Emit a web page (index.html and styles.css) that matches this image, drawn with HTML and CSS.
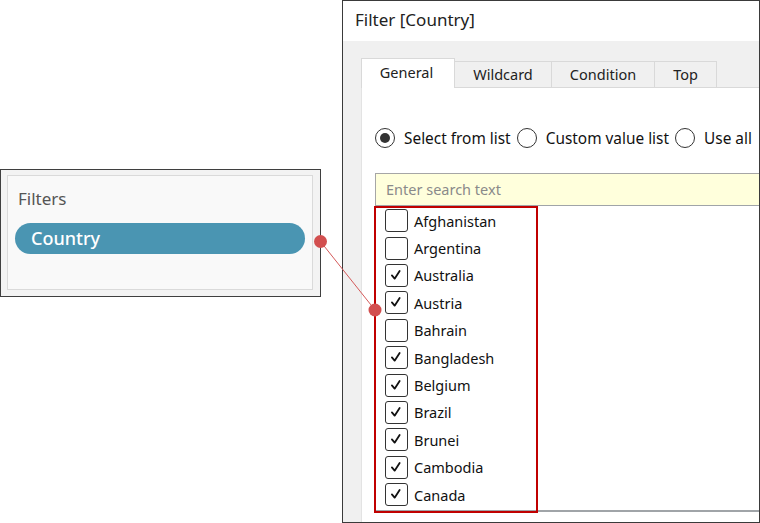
FILE: index.html
```html
<!DOCTYPE html>
<html>
<head>
<meta charset="utf-8">
<link rel="stylesheet" href="styles.css">
</head>
<body>
<div class="page">
  <div class="left">
    <div class="filters">
      <div class="filters-inner">
        <div class="filters-title">Filters</div>
        <div class="pill">Country</div>
      </div>
    </div>
  </div>
  <div class="dialog">
    <div class="titlebar">Filter [Country]</div>
    <div class="dialog-body">
      <div class="tabs">
        <div class="tab active">General</div>
        <div class="tab">Wildcard</div>
        <div class="tab">Condition</div>
        <div class="tab">Top</div>
      </div>
      <div class="panel">
        <div class="radios">
          <label class="radio"><span class="dot checked"></span>Select from list</label>
          <label class="radio"><span class="dot"></span>Custom value list</label>
          <label class="radio"><span class="dot"></span>Use all</label>
        </div>
        <div class="search">Enter search text</div>
        <div class="list">
          <div class="item"><span class="box"></span>Afghanistan</div>
          <div class="item"><span class="box"></span>Argentina</div>
          <div class="item"><span class="box"><svg viewBox="0 0 22 22"><path d="M6.5 11.5 L9.5 15 L15 6.5"/></svg></span>Australia</div>
          <div class="item"><span class="box"><svg viewBox="0 0 22 22"><path d="M6.5 11.5 L9.5 15 L15 6.5"/></svg></span>Austria</div>
          <div class="item"><span class="box"></span>Bahrain</div>
          <div class="item"><span class="box"><svg viewBox="0 0 22 22"><path d="M6.5 11.5 L9.5 15 L15 6.5"/></svg></span>Bangladesh</div>
          <div class="item"><span class="box"><svg viewBox="0 0 22 22"><path d="M6.5 11.5 L9.5 15 L15 6.5"/></svg></span>Belgium</div>
          <div class="item"><span class="box"><svg viewBox="0 0 22 22"><path d="M6.5 11.5 L9.5 15 L15 6.5"/></svg></span>Brazil</div>
          <div class="item"><span class="box"><svg viewBox="0 0 22 22"><path d="M6.5 11.5 L9.5 15 L15 6.5"/></svg></span>Brunei</div>
          <div class="item"><span class="box"><svg viewBox="0 0 22 22"><path d="M6.5 11.5 L9.5 15 L15 6.5"/></svg></span>Cambodia</div>
          <div class="item"><span class="box"><svg viewBox="0 0 22 22"><path d="M6.5 11.5 L9.5 15 L15 6.5"/></svg></span>Canada</div>
          <div class="highlight"></div>
        </div>
      </div>
    </div>
  </div>
  <svg class="connector" width="760" height="523" viewBox="0 0 760 523">
    <line x1="320.5" y1="241.5" x2="375" y2="310" stroke="#d45a5a" stroke-width="1"/>
    <circle cx="320.5" cy="241.5" r="6.5" fill="#d24f4f"/>
    <circle cx="375" cy="310" r="6.5" fill="#d24f4f"/>
  </svg>
</div>
</body>
</html>
```
FILE: styles.css
```css
* { box-sizing: border-box; }
html, body { margin: 0; padding: 0; background: #fff; }
body { font-family: "Noto Sans", "Open Sans", sans-serif; color: #1a1a1a; }
.page { position: relative; width: 760px; height: 523px; overflow: hidden; display: flex; }

.left { width: 342px; flex: none; padding-top: 169px; }
.filters {
  width: 321px; height: 128px;
  border: 1px solid #3f3f3f;
  background: #f3f3f3;
  padding: 5px 7px 6px 6px;
}
.filters-inner {
  height: 100%;
  border: 1px solid #dadada;
  background: #f9f9f9;
  padding: 12px 7px 0 7px;
}
.filters-title { font-size: 17px; color: #555; line-height: 22px; padding-left: 3px; }
.pill {
  margin-top: 13px;
  height: 31px; border-radius: 16px;
  background: #4a95b2;
  color: #fff; font-size: 18px; font-weight: 500;
  line-height: 31px; padding-left: 16px;
}

.dialog {
  flex: none; width: 418px; height: 523px;
  border: 1px solid #3a3a3a;
  background: #f0f0f0;
  display: flex; flex-direction: column;
}
.titlebar {
  height: 40px; background: #fff; flex: none;
  font-size: 17px; line-height: 38px; padding-left: 12px; color: #222;
}
.dialog-body { flex: 1; padding: 17px 0 0 18px; display: flex; flex-direction: column; }
.tabs { display: flex; align-items: flex-end; height: 29px; flex: none; }
.tab {
  height: 26px; border: 1px solid #d9d9d9; border-bottom: none; margin-left: -1px;
  font-size: 14.5px; color: #222; line-height: 25px; text-align: center;
  background: #f0f0f0;
}
.tab:nth-child(1) { width: 94px; height: 30px; background: #fff; line-height: 27px; margin-left: 0; position: relative; z-index: 1; margin-bottom: -1px; padding-right: 3px; }
.tab:nth-child(2) { width: 98px; }
.tab:nth-child(3) { width: 104px; }
.tab:nth-child(4) { width: 63px; }
.panel {
  flex: 1; background: #fff; border-top: 1px solid #d9d9d9; border-left: 1px solid #e3e3e3;
  padding: 0 0 0 13px; display: flex; flex-direction: column;
}
.radios { display: flex; align-items: center; height: 20px; margin-top: 40px; font-size: 15.4px; color: #111; flex: none; }
.radio { display: flex; align-items: center; white-space: nowrap; margin-right: 6px; }
.dot {
  width: 20px; height: 20px; border-radius: 50%; border: 1.5px solid #333; background: #fff;
  margin-right: 9px; display: flex; align-items: center; justify-content: center;
}
.dot.checked::after { content: ""; width: 10px; height: 10px; border-radius: 50%; background: #333; }
.search {
  margin-top: 25px; height: 33px; background: #ffffdc; flex: none;
  border: 1px solid #a6a6a6; border-right: none; border-bottom-color: #a0a4a8;
  font-size: 14.5px; color: #8a8a8a; line-height: 31px; padding-left: 10px;
}
.list {
  position: relative; height: 306px; flex: none;
  border-left: 1px solid #a6a6a6; border-bottom: 2px solid #a0a4a8;
  padding-top: 1px;
}
.item { height: 27.4px; display: flex; align-items: center; padding-left: 9px; font-size: 14.5px; color: #111; }
.box {
  width: 23px; height: 23px; border: 1.5px solid #333; border-radius: 3px; margin-right: 6px; flex: none;
  display: flex;
}
.box svg { width: 20px; height: 20px; }
.box path { fill: none; stroke: #111; stroke-width: 2; stroke-linecap: round; stroke-linejoin: round; }
.highlight {
  position: absolute; left: -2px; top: 0; width: 164px; height: 307px;
  border: 2px solid #c00000;
}
.connector { position: absolute; left: 0; top: 0; pointer-events: none; }
```
